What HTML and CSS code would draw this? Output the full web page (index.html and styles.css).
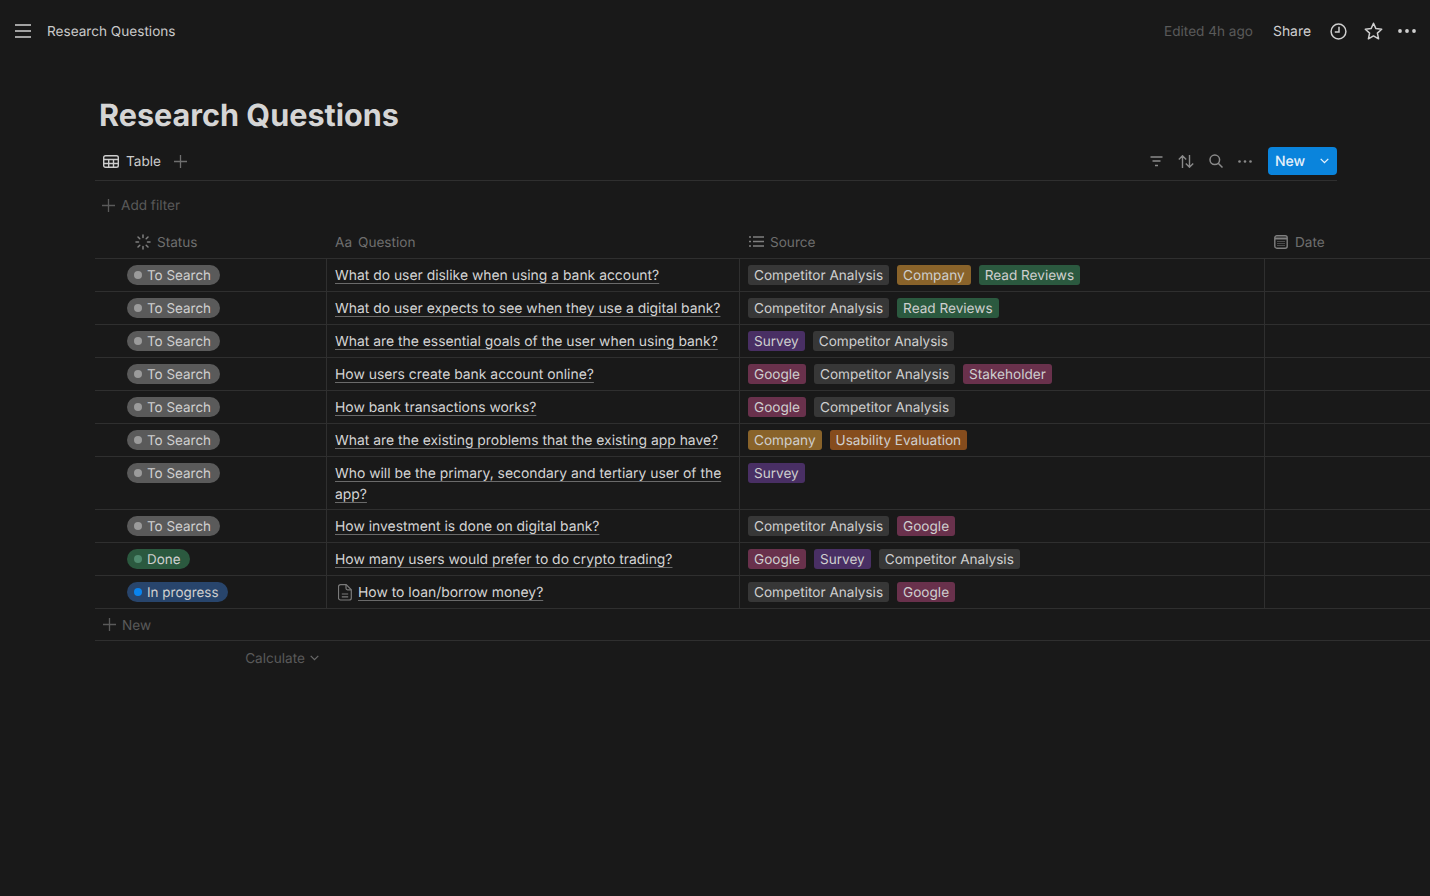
FILE: index.html
```html
<!DOCTYPE html>
<html lang="en">
<head>
<meta charset="utf-8">
<title>Research Questions</title>
<link rel="stylesheet" href="styles.css">
</head>
<body>
<header class="topbar">
  <div class="top-left">
    <svg class="ic-menu" width="16" height="14" viewBox="0 0 16 14"><path d="M0 1h16M0 7h16M0 13h16" stroke="#cfcfcf" stroke-width="1.6" fill="none"/></svg>
    <span class="crumb">Research Questions</span>
  </div>
  <div class="top-right">
    <span class="edited">Edited 4h ago</span>
    <span class="share">Share</span>
    <svg class="ic-clock" width="17" height="17" viewBox="0 0 17 17" fill="none" stroke="#cfcfcf" stroke-width="1.500"><circle cx="8.5" cy="8.5" r="7.400"/><path d="M9 3.800v5.200H4.800"/></svg>
    <svg class="ic-star" width="19" height="18" viewBox="0 0 19 18" fill="none" stroke="#cfcfcf" stroke-width="1.500" stroke-linejoin="round"><path d="M9.500 1.300l2.400 5.300 5.800.6-4.300 3.900 1.200 5.700-5.100-2.900-5.100 2.900 1.200-5.700L1.300 7.200l5.800-.6z"/></svg>
    <svg class="ic-dots" width="18" height="4" viewBox="0 0 18 4" fill="#cfcfcf"><circle cx="2" cy="2" r="1.900"/><circle cx="9" cy="2" r="1.900"/><circle cx="16" cy="2" r="1.900"/></svg>
  </div>
</header>

<main class="page">
  <h1 class="title">Research Questions</h1>

  <div class="toolbar">
    <div class="views">
      <svg width="16" height="13" viewBox="0 0 16 13" fill="none" stroke="#cdcdcd" stroke-width="1.400"><rect x=".7" y=".7" width="14.600" height="11.600" rx="1.800"/><path d="M.7 4.500h14.600M.7 8.500h14.600M5.700 4.500v7.800M10.500 4.500v7.800"/></svg>
      <span class="view-name">Table</span>
      <svg class="view-add" width="13" height="13" viewBox="0 0 13 13"><path d="M6.500 0v13M0 6.500h13" stroke="#6f6f6f" stroke-width="1.300"/></svg>
    </div>
    <div class="actions">
      <svg width="13" height="11" viewBox="0 0 13 11" fill="none" stroke="#8a8a8a" stroke-width="1.500"><path d="M.5 1h12M2.500 5h8M5 9.500h3"/></svg>
      <svg width="16" height="13" viewBox="0 0 16 13" fill="none" stroke="#8a8a8a" stroke-width="1.400"><path d="M4.500 13V1M.8 4.500L4.500.8l3.700 3.700M11.500 0v12M7.800 8.500l3.700 3.700 3.700-3.700"/></svg>
      <svg width="14" height="14" viewBox="0 0 14 14" fill="none" stroke="#8a8a8a" stroke-width="1.500"><circle cx="5.800" cy="5.800" r="4.800"/><path d="M9.200 9.200l4.300 4.300"/></svg>
      <svg width="14" height="3" viewBox="0 0 14 3" fill="#8a8a8a"><circle cx="1.500" cy="1.500" r="1.300"/><circle cx="7" cy="1.500" r="1.300"/><circle cx="12.500" cy="1.500" r="1.300"/></svg>
      <div class="new-btn"><span>New</span><svg width="9" height="6" viewBox="0 0 9 6" fill="none" stroke="#e8f2fb" stroke-width="1.300"><path d="M.7.900l3.800 3.800L8.300.9"/></svg></div>
    </div>
  </div>

  <div class="filter">
    <svg width="13" height="13" viewBox="0 0 13 13"><path d="M6.500 0v13M0 6.500h13" stroke="#5a5a5a" stroke-width="1.300"/></svg>
    <span>Add filter</span>
  </div>

  <section class="table">
    <div class="row head">
      <div class="hcell h-status">
        <svg width="16" height="16" viewBox="0 0 16 16" fill="none" stroke="#7f7f7f" stroke-width="1.500" stroke-linecap="round"><path d="M8 1v2.500M8 12.500V15M1 8h2.500M12.500 8H15M3 3l1.800 1.800M11.200 11.200L13 13M3 13l1.800-1.800M11.200 4.800L13 3"/></svg>
        <span>Status</span>
      </div>
      <div class="hcell h-q"><span class="aa">Aa</span><span>Question</span></div>
      <div class="hcell h-src">
        <svg width="15" height="11" viewBox="0 0 15 11" fill="none" stroke="#7f7f7f" stroke-width="1.300"><path d="M0 1h2M4 1h11M0 5.500h2M4 5.500h11M0 10h2M4 10h11"/></svg>
        <span>Source</span>
      </div>
      <div class="hcell h-date">
        <svg width="14" height="14" viewBox="0 0 14 14" fill="none" stroke="#7f7f7f"><rect x=".8" y=".8" width="12.400" height="12.400" rx="2" stroke-width="1.400"/><path d="M1 3.500h12" stroke-width="2"/><path d="M3.500 6.500h7M3.500 8.500h7M3.500 10.500h7" stroke-width="1" stroke-dasharray="1 1"/></svg>
        <span>Date</span>
      </div>
    </div>

    <div class="row">
      <div class="cell status"><span class="pill grey"><i></i>To Search</span></div>
      <div class="cell q"><a>What do user dislike when using a bank account?</a></div>
      <div class="cell src"><span class="tag t-grey">Competitor Analysis</span><span class="tag t-brown">Company</span><span class="tag t-green">Read Reviews</span></div>
      <div class="cell date"></div>
    </div>
    <div class="row">
      <div class="cell status"><span class="pill grey"><i></i>To Search</span></div>
      <div class="cell q"><a>What do user expects to see when they use a digital bank?</a></div>
      <div class="cell src"><span class="tag t-grey">Competitor Analysis</span><span class="tag t-green">Read Reviews</span></div>
      <div class="cell date"></div>
    </div>
    <div class="row">
      <div class="cell status"><span class="pill grey"><i></i>To Search</span></div>
      <div class="cell q"><a>What are the essential goals of the user when using bank?</a></div>
      <div class="cell src"><span class="tag t-purple">Survey</span><span class="tag t-grey">Competitor Analysis</span></div>
      <div class="cell date"></div>
    </div>
    <div class="row">
      <div class="cell status"><span class="pill grey"><i></i>To Search</span></div>
      <div class="cell q"><a>How users create bank account online?</a></div>
      <div class="cell src"><span class="tag t-red">Google</span><span class="tag t-grey">Competitor Analysis</span><span class="tag t-red">Stakeholder</span></div>
      <div class="cell date"></div>
    </div>
    <div class="row">
      <div class="cell status"><span class="pill grey"><i></i>To Search</span></div>
      <div class="cell q"><a>How bank transactions works?</a></div>
      <div class="cell src"><span class="tag t-red">Google</span><span class="tag t-grey">Competitor Analysis</span></div>
      <div class="cell date"></div>
    </div>
    <div class="row">
      <div class="cell status"><span class="pill grey"><i></i>To Search</span></div>
      <div class="cell q"><a>What are the existing problems that the existing app have?</a></div>
      <div class="cell src"><span class="tag t-brown">Company</span><span class="tag t-orange">Usability Evaluation</span></div>
      <div class="cell date"></div>
    </div>
    <div class="row">
      <div class="cell status"><span class="pill grey"><i></i>To Search</span></div>
      <div class="cell q"><a>Who will be the primary, secondary and tertiary user of the app?</a></div>
      <div class="cell src"><span class="tag t-purple">Survey</span></div>
      <div class="cell date"></div>
    </div>
    <div class="row">
      <div class="cell status"><span class="pill grey"><i></i>To Search</span></div>
      <div class="cell q"><a>How investment is done on digital bank?</a></div>
      <div class="cell src"><span class="tag t-grey">Competitor Analysis</span><span class="tag t-red">Google</span></div>
      <div class="cell date"></div>
    </div>
    <div class="row">
      <div class="cell status"><span class="pill green"><i></i>Done</span></div>
      <div class="cell q"><a>How many users would prefer to do crypto trading?</a></div>
      <div class="cell src"><span class="tag t-red">Google</span><span class="tag t-purple">Survey</span><span class="tag t-grey">Competitor Analysis</span></div>
      <div class="cell date"></div>
    </div>
    <div class="row">
      <div class="cell status"><span class="pill blue"><i></i>In progress</span></div>
      <div class="cell q with-doc">
        <svg width="14" height="17" viewBox="0 0 14 17" fill="none" stroke="#7a7a7a" stroke-width="1.200"><path d="M2.500.7h5.700l5.100 5.100v8.200a2 2 0 0 1-2 2h-8.800a2 2 0 0 1-2-2V2.700a2 2 0 0 1 2-2z"/><path d="M8 .9v3.400a1.500 1.500 0 0 0 1.500 1.500h3.600M3.800 10h6.400M3.800 12.800h6.400"/></svg>
        <a>How to loan/borrow money?</a>
      </div>
      <div class="cell src"><span class="tag t-grey">Competitor Analysis</span><span class="tag t-red">Google</span></div>
      <div class="cell date"></div>
    </div>

    <div class="new-row">
      <svg width="13" height="13" viewBox="0 0 13 13"><path d="M6.500 0v13M0 6.500h13" stroke="#5a5a5a" stroke-width="1.300"/></svg>
      <span>New</span>
    </div>
    <div class="calc">
      <span>Calculate</span>
      <svg width="9" height="6" viewBox="0 0 9 6" fill="none" stroke="#6a6a6a" stroke-width="1.200"><path d="M.7.900l3.800 3.800L8.300.9"/></svg>
    </div>
  </section>
</main>
</body>
</html>
```

FILE: styles.css
```css
* { box-sizing: border-box; }
html, body { margin: 0; height: 100%; }
body {
  background: #191919;
  color: #d4d4d4;
  font-family: Inter, "Liberation Sans", sans-serif;
  font-size: 13.6px;
  line-height: 22px;
  text-rendering: geometricPrecision;
  overflow: hidden;
}
.crumb, .edited, .share, .view-name, .new-btn span, .filter span, .hcell span, .new-row span, .calc span {
  padding-top: 2px;
}
.topbar {
  height: 62px;
  display: flex;
  justify-content: space-between;
  align-items: center;
  padding: 0 14px 0 15px;
}
.top-left { display: flex; align-items: center; gap: 16px; }
.crumb { color: #c9c9c9; }
.top-right { display: flex; align-items: center; }
.edited { color: #5a5a5a; margin-right: -1px; }
.share { color: #cfcfcf; margin-left: 21px; font-size: 13.9px; }
.ic-clock { margin-left: 19px; }
.ic-star { margin-left: 17px; }
.ic-dots { margin-left: 15px; }

.page { padding-left: 95px; }
.title {
  margin: 0;
  padding: 34px 0 0 4px;
  height: 86px;
  font-size: 30.6px;
  line-height: 40px;
  font-weight: 700;
  color: #d5d5d5;
}
.toolbar {
  width: 1242px;
  height: 33px;
  display: flex;
  justify-content: space-between;
  align-items: center;
  border-bottom: 1px solid #2f2f2f;
  padding: 0 0 6px 8px;
}
.views { display: flex; align-items: center; }
.view-name { margin-left: 7px; color: #cdcdcd; }
.view-add { margin-left: 13px; }
.actions { display: flex; align-items: center; gap: 15px; }
.new-btn {
  width: 69px;
  height: 28px;
  margin-left: 1px;
  background: #0a84dc;
  border-radius: 4px;
  color: #e6f1fa;
  font-size: 14px;
  font-weight: 500;
  display: flex;
  align-items: center;
  justify-content: space-between;
  padding: 0 8px 0 7px;
}
.filter {
  height: 48px;
  display: flex;
  align-items: center;
  gap: 6px;
  padding-left: 7px;
  color: #5a5a5a;
}
.table { width: 1335px; }
.row {
  display: grid;
  grid-template-columns: 231px 413px 525px 1fr;
  border-bottom: 1px solid #2f2f2f;
  min-height: 33px;
}
.head {
  height: 30px;
  min-height: 30px;
  color: #6e6e6e;
  padding-bottom: 4px;
}
.hcell { display: flex; align-items: center; }
.h-status { padding-left: 40px; gap: 6px; }
.h-q { padding-left: 9px; gap: 6px; }
.h-src { padding-left: 10px; gap: 6px; }
.h-date { padding-left: 10px; gap: 7px; }
.cell { padding: 6px 8px 0; min-width: 0; }
.status { padding-left: 32px; display: flex; align-items: flex-start; }
.q, .src, .date { border-left: 1px solid #2f2f2f; }
.q { font-size: 13.9px; line-height: 21px; padding-top: 7px; padding-bottom: 3px; }
.q a {
  text-decoration: underline;
  text-decoration-color: #6a6a6a;
  text-underline-offset: 3px;
  text-decoration-thickness: 1px;
}
.with-doc { display: flex; align-items: flex-start; gap: 6px; padding-left: 11px; }
.with-doc svg { margin-top: 1px; flex: none; }
.pill {
  display: inline-flex;
  align-items: flex-start;
  height: 20px;
  padding: 0 9px 0 7px;
  border-radius: 10px;
  color: #cfcfcf;
  font-size: 13.45px;
}
.pill i { width: 8px; height: 8px; border-radius: 50%; margin: 6px 5px 0 0; }
.grey { background: #5a5a5a; }
.grey i { background: #9b9b9b; }
.green { background: #2b593f; }
.green i { background: #4f8a6e; }
.blue { background: #28456c; }
.blue i { background: #0a84ee; }
.src { display: flex; gap: 8px; align-items: flex-start; }
.tag {
  height: 20px;
  padding: 0 6px;
  border-radius: 3px;
  color: #cfcfcf;
}
.t-grey { background: #373737; }
.t-brown { background: #89632a; }
.t-green { background: #2b593f; }
.t-purple { background: #492f64; }
.t-red { background: #69314c; }
.t-orange { background: #854c1d; }
.new-row {
  height: 32px;
  display: flex;
  align-items: center;
  gap: 6px;
  padding-left: 8px;
  color: #5a5a5a;
  border-bottom: 1px solid #2f2f2f;
}
.calc {
  height: 34px;
  width: 224px;
  display: flex;
  align-items: center;
  justify-content: flex-end;
  gap: 5px;
  color: #5a5a5a;
}
```
